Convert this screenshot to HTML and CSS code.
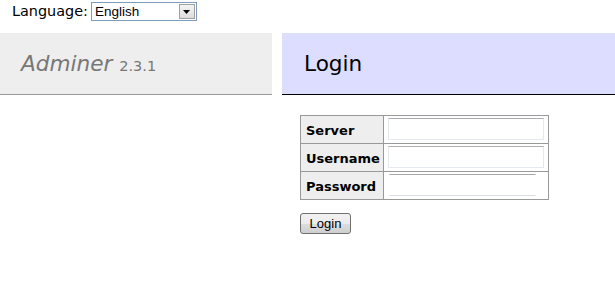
FILE: index.html
```html
<!DOCTYPE html>
<html lang="en">
<head>
	<meta charset="UTF-8">
	<title>Login - Adminer</title>
	<link rel="stylesheet" href="styles.css">
</head>
<body>
	<form class="lang" action="">
		<label class="lang-label" for="langSelect">Language:</label>
		<span class="select-box">
			<select class="lang-select" id="langSelect">
				<option selected>English</option>
				<option>Čeština</option>
				<option>Deutsch</option>
			</select>
			<span class="select-arrow">
				<svg width="7" height="4" viewBox="0 0 7 4"><path d="M0 0h7L3.5 4z" fill="#000"/></svg>
			</span>
		</span>
	</form>
	<div class="layout">
		<div class="menu">
			<h1 class="brand"><span class="brand-name">Adminer</span> <span class="version">2.3.1</span></h1>
		</div>
		<div class="content">
			<h2 class="page-title">Login</h2>
			<form class="login-form" action="" method="post">
				<table class="login-table" cellspacing="0">
					<tr>
						<th>Server</th>
						<td><input class="field" type="text" name="server"></td>
					</tr>
					<tr>
						<th>Username</th>
						<td><input class="field" type="text" name="username"></td>
					</tr>
					<tr>
						<th>Password</th>
						<td><input class="field field-pass" type="password" name="password"></td>
					</tr>
				</table>
				<p class="actions"><button class="btn" type="submit">Login</button></p>
			</form>
		</div>
	</div>
</body>
</html>
```

FILE: styles.css
```css
* {
	padding: 0;
	margin: 0;
	box-sizing: border-box;
}
html, body {
	background: #fff;
	color: #000;
	font: 14.4px/1.25 "DejaVu Sans", Verdana, sans-serif;
}
.lang {
	height: 33px;
	display: flex;
	align-items: flex-start;
	padding: 2px 0 0 12px;
}
.lang-label {
	font-size: 14.4px;
	line-height: 19px;
	margin-right: 3px;
}
.select-box {
	display: flex;
	width: 106px;
	height: 19px;
	border: 1px solid #7f9db9;
	background: #fff;
}
.lang-select {
	flex: 1;
	min-width: 0;
	border: 0;
	outline: 0;
	background: transparent;
	appearance: none;
	-webkit-appearance: none;
	font: 13.5px "Liberation Sans", Arial, sans-serif;
	padding: 0 0 0 3px;
	color: #000;
}
.select-arrow {
	width: 16px;
	margin: 1px;
	display: flex;
	align-items: center;
	justify-content: center;
	border: 1px solid #a0a0a0;
	background: linear-gradient(#f4f4f4, #dcdcdc);
}
.layout {
	display: flex;
}
.menu {
	width: 272px;
}
.brand {
	height: 62px;
	background: #eee;
	border-bottom: 1px solid #999;
	font-size: 21.6px;
	line-height: 27px;
	font-weight: normal;
	font-style: italic;
	padding: 17px 21px;
	color: #777;
	white-space: nowrap;
}
.version {
	font-style: normal;
	font-size: 14.5px;
	line-height: 1;
	color: #777;
}
.content {
	flex: 1;
	margin-left: 10px;
}
.page-title {
	height: 62px;
	background: #ddf;
	border-bottom: 1px solid #000;
	font-size: 21.6px;
	line-height: 27px;
	font-weight: normal;
	padding: 17px 22px;
	margin-bottom: 20px;
}
.login-form {
	margin-left: 18px;
}
.login-table {
	border-collapse: collapse;
	font-size: 13px;
}
.login-table th,
.login-table td {
	border: 1px solid #999;
	padding: 2px 4px 3px 4px;
	height: 28px;
	text-align: left;
}
.login-table th {
	background: #eee;
	font-weight: bold;
	padding: 5px 3px 1px 5px;
}
.field {
	display: block;
	width: 156px;
	height: 22px;
	border: 1px solid #e3e9ef;
	border-top-color: #abadb3;
	font: 13px "DejaVu Sans", Verdana, sans-serif;
	padding: 1px 3px;
	outline: 0;
}
.field-pass {
	width: 147px;
	margin-left: 1px;
	border-left-color: #fff;
	border-right-color: #fff;
	border-top-color: #a7a7a7;
	border-bottom-color: #d8dce6;
}
.actions {
	margin-top: 13px;
}
.btn {
	width: 51px;
	height: 21px;
	font: 13px "Liberation Sans", Arial, sans-serif;
	color: #000;
	border: 1px solid #707070;
	border-radius: 3px;
	background: linear-gradient(#f2f2f2 0%, #ebebeb 50%, #dddddd 51%, #cfcfcf 100%);
}
```
